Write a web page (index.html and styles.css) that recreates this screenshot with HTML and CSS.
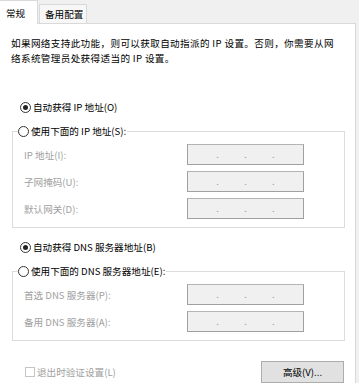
FILE: index.html
```html
<!DOCTYPE html>
<html lang="zh-CN">
<head>
<meta charset="utf-8">
<link rel="stylesheet" href="styles.css">
</head>
<body>
<div class="tabs">
  <div class="tab active">常规</div>
  <div class="tab">备用配置</div>
</div>
<div class="panel">
  <p class="desc">如果网络支持此功能，则可以获取自动指派的 IP 设置。否则，你需要从网<br>络系统管理员处获得适当的 IP 设置。</p>

  <div class="radio first"><span class="circle checked"></span>自动获得 IP 地址(O)</div>

  <fieldset class="group">
    <legend><span class="radio"><span class="circle"></span>使用下面的 IP 地址(S):</span></legend>
    <div class="field"><span class="lbl">IP 地址(I):</span><div class="ip"><i></i><b>.</b><i></i><b>.</b><i></i><b>.</b><i></i></div></div>
    <div class="field"><span class="lbl">子网掩码(U):</span><div class="ip"><i></i><b>.</b><i></i><b>.</b><i></i><b>.</b><i></i></div></div>
    <div class="field"><span class="lbl">默认网关(D):</span><div class="ip"><i></i><b>.</b><i></i><b>.</b><i></i><b>.</b><i></i></div></div>
  </fieldset>

  <div class="radio dns"><span class="circle checked"></span>自动获得 DNS 服务器地址(B)</div>

  <fieldset class="group group2">
    <legend><span class="radio"><span class="circle"></span>使用下面的 DNS 服务器地址(E):</span></legend>
    <div class="field"><span class="lbl">首选 DNS 服务器(P):</span><div class="ip"><i></i><b>.</b><i></i><b>.</b><i></i><b>.</b><i></i></div></div>
    <div class="field"><span class="lbl">备用 DNS 服务器(A):</span><div class="ip"><i></i><b>.</b><i></i><b>.</b><i></i><b>.</b><i></i></div></div>
  </fieldset>

  <div class="bottom">
    <div class="check"><span class="box"></span>退出时验证设置(L)</div>
    <div class="button">高级(V)...</div>
  </div>
</div>
</body>
</html>
```
FILE: styles.css
```css
html, body {
  margin: 0;
  padding: 0;
  background: #f0f0f0;
  overflow: hidden;
}
body {
  font-family: "Noto Sans CJK SC", "Noto Sans", sans-serif;
  font-size: 9.6px;
  color: #000;
  width: 359px;
  height: 383px;
}
.tabs {
  display: flex;
  align-items: flex-end;
  height: 23px;
}
.tab {
  box-sizing: border-box;
  height: 19px;
  line-height: 18px;
  padding: 0 3px 0 5px;
  margin-left: 1px;
  background: #f7f7f7;
  border: 1px solid #d9d9d9;
  border-bottom: none;
}
.tab.active {
  height: 24px;
  width: 38px;
  margin-left: 0;
  margin-bottom: -1px;
  padding-left: 6px;
  line-height: 24px;
  background: #fff;
  border-left: none;
  position: relative;
  z-index: 1;
}
.panel {
  box-sizing: border-box;
  width: 356px;
  height: 360px;
  background: #fff;
  border: 1px solid #d9d9d9;
  border-left: none;
  border-bottom: none;
  padding: 12px 0 0 1px;
}
.desc {
  margin: 0 0 0 10px;
  line-height: 15px;
  letter-spacing: 0.35px;
  white-space: nowrap;
}
.radio {
  display: flex;
  align-items: center;
  line-height: 16px;
  height: 16px;
  white-space: nowrap;
}
.radio.first {
  margin: 33px 0 0 19px;
}
.radio.dns {
  margin: 11px 0 0 19px;
}
.circle {
  box-sizing: border-box;
  width: 11px;
  height: 11px;
  border: 1px solid #333;
  border-radius: 50%;
  margin-right: 2px;
  display: flex;
  align-items: center;
  justify-content: center;
  background: #fff;
}
.circle.checked::after {
  content: "";
  width: 5px;
  height: 5px;
  border-radius: 50%;
  background: #222;
}
.group {
  box-sizing: border-box;
  width: 333px;
  margin: 8px 0 0 11px;
  padding: 5px 0 8px 11px;
  border: 1px solid #dcdcdc;
  display: flex;
  flex-direction: column;
  gap: 6px;
  min-width: 0;
}
.group legend {
  padding: 0 1px 0 0;
  margin-left: -6px;
  line-height: 16px;
}
.group2 {
  margin-top: 8px;
}
.field {
  display: flex;
  align-items: center;
  height: 21px;
}
.lbl {
  width: 163px;
  color: #a0a0a0;
  white-space: nowrap;
}
.ip {
  box-sizing: border-box;
  width: 117px;
  height: 21px;
  background: #f0f0f0;
  border: 1px solid #a0a0a0;
  border-top-color: #b4b4b4;
  display: flex;
  align-items: center;
  padding: 0 3px;
}
.ip i {
  flex: 1;
}
.ip b {
  font-weight: normal;
  color: #9a9a9a;
  font-size: 9px;
  line-height: 10px;
}
.bottom {
  box-sizing: border-box;
  width: 343px;
  margin-top: 20px;
  padding-left: 24px;
  display: flex;
  align-items: center;
  justify-content: space-between;
}
.check {
  display: flex;
  align-items: center;
  color: #a0a0a0;
  white-space: nowrap;
}
.box {
  box-sizing: border-box;
  width: 10px;
  height: 10px;
  border: 1px solid #c4c4c4;
  margin-right: 2px;
}
.button {
  box-sizing: border-box;
  width: 83px;
  height: 22px;
  background: #e1e1e1;
  border: 1px solid #adadad;
  display: flex;
  align-items: center;
  justify-content: center;
}
```
